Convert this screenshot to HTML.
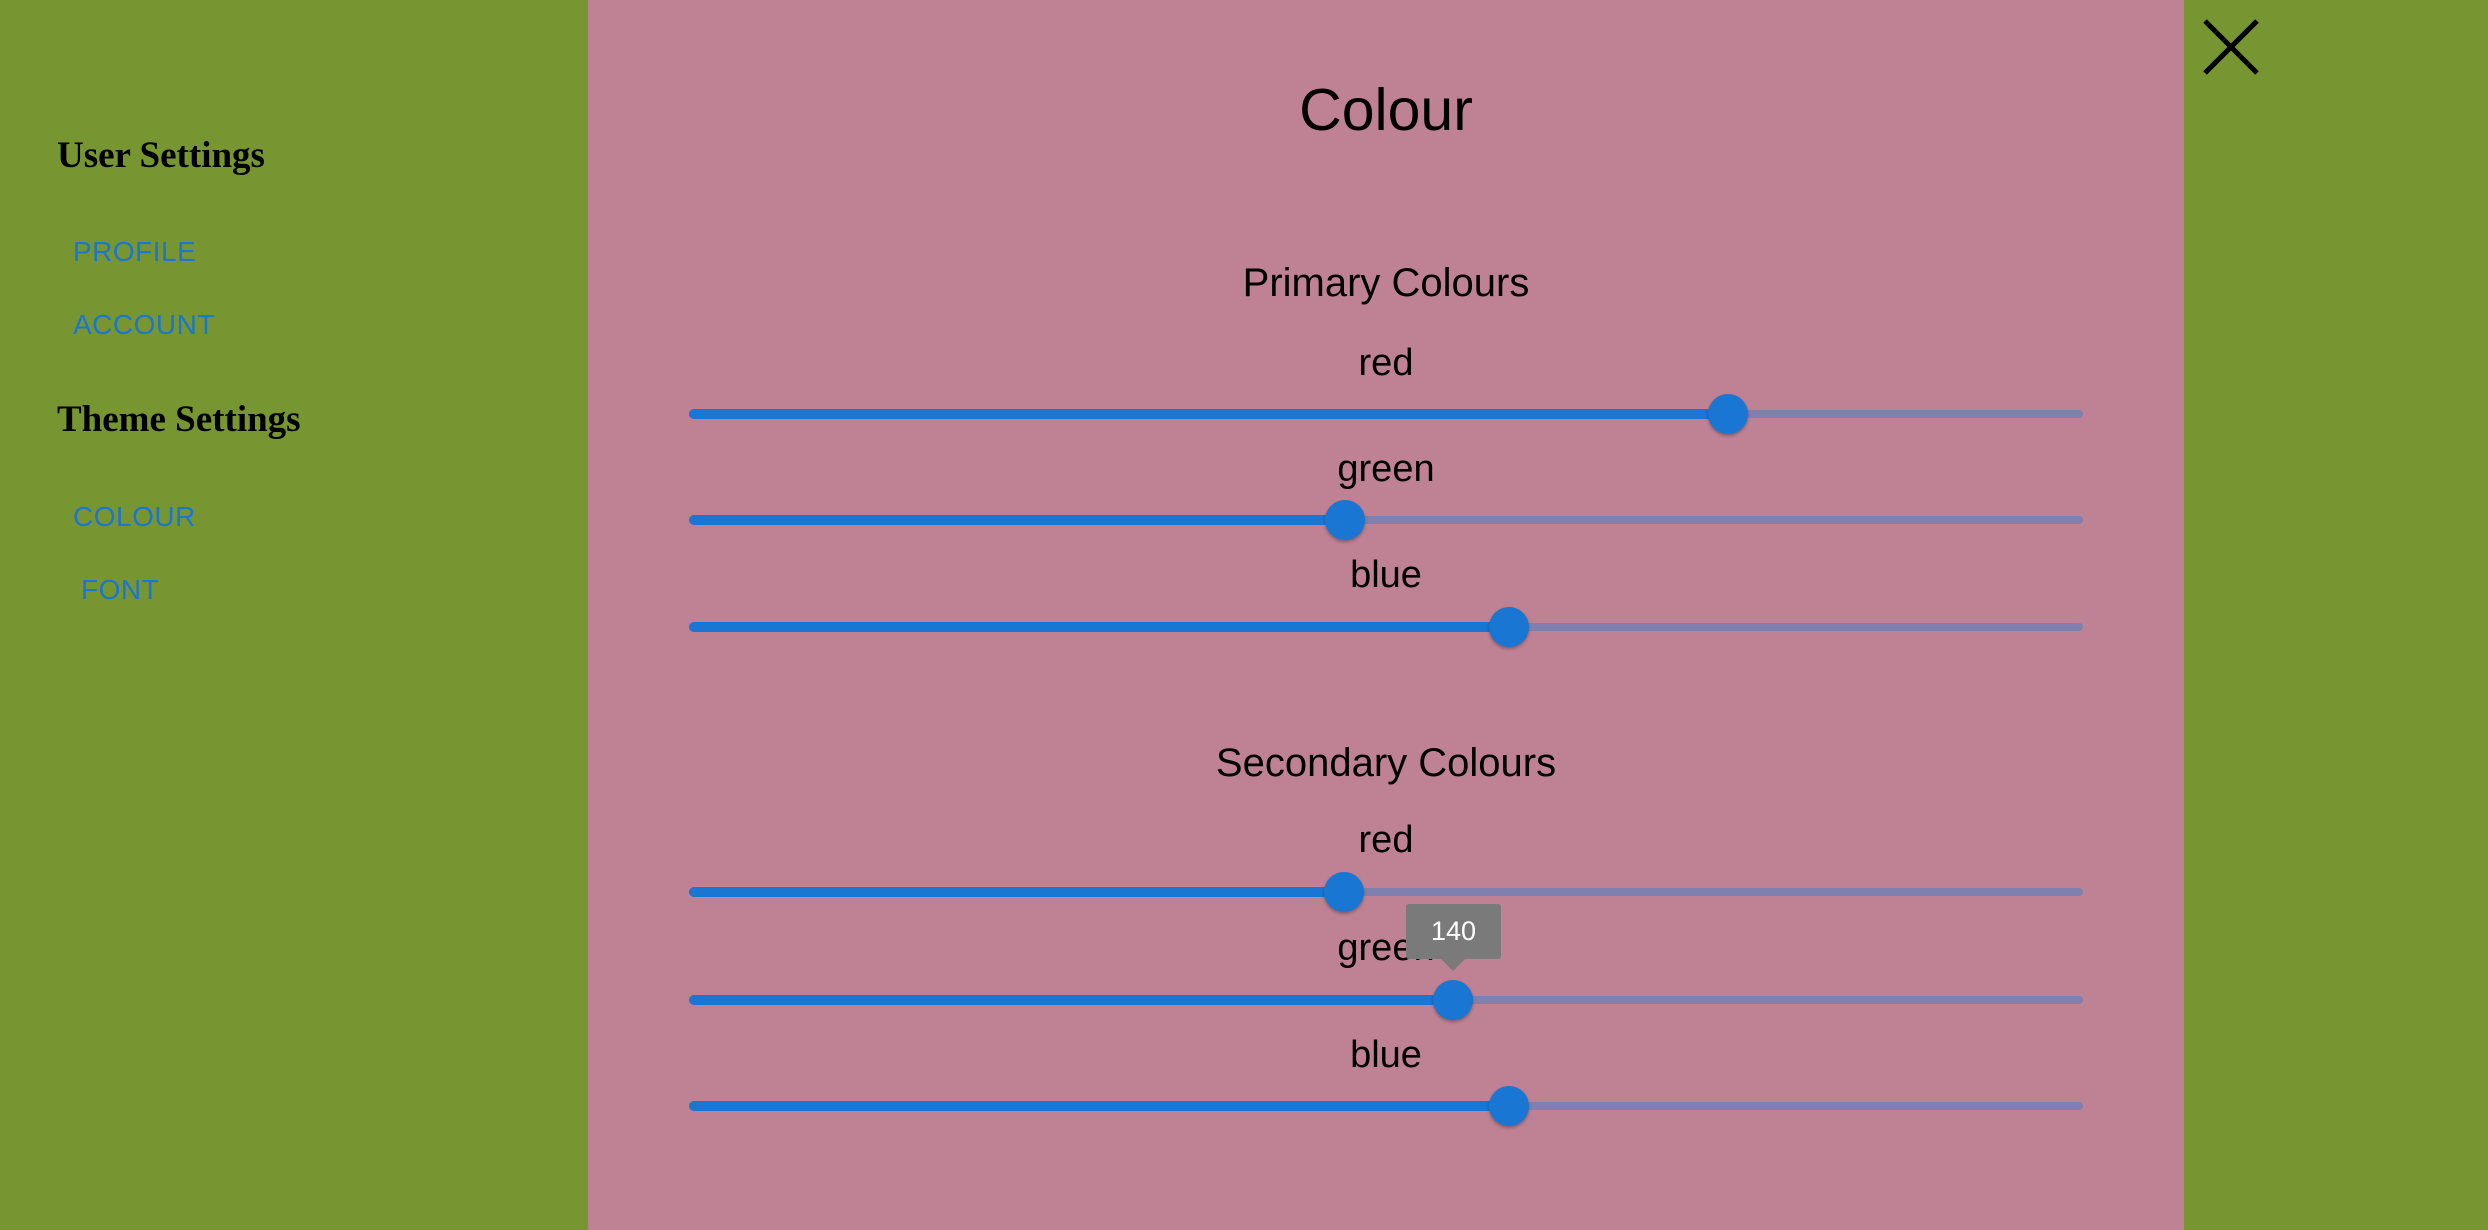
<!DOCTYPE html>
<html><head><style>
html,body{margin:0;padding:0;width:2488px;height:1230px;overflow:hidden;background:#779632;font-family:"Liberation Sans",Arial,sans-serif}
.panel{position:absolute;left:588px;top:0;width:1596px;height:1230px;background:#be8294}
.h{position:absolute;left:57px;font-family:"Liberation Serif",serif;font-weight:bold;font-size:37px;color:#000;line-height:1}
.l{position:absolute;font-size:28px;color:#1976d2;line-height:1;letter-spacing:0.5px}
.c{position:absolute;width:100%;text-align:center;color:#000;line-height:1}
.track{position:absolute;left:689px;width:1394px;height:8px;border-radius:4px;background:#8080b0}
.act{position:absolute;left:0;top:-1px;height:10px;border-radius:5px;background:#1976d2}
.th{position:absolute;top:-16px;width:40px;height:40px;margin-left:-20px;border-radius:50%;background:#1976d2;box-shadow:0 2px 3px rgba(0,0,0,.3)}
</style></head><body>
<div class="h" style="top:137px">User Settings</div>
<div class="l" style="left:73px;top:238px">PROFILE</div>
<div class="l" style="left:73px;top:311px">ACCOUNT</div>
<div class="h" style="top:401px">Theme Settings</div>
<div class="l" style="left:73px;top:503px">COLOUR</div>
<div class="l" style="left:81px;top:576px">FONT</div>
<div class="panel">
<div class="c" style="top:81px;font-size:59px">Colour</div>
<div class="c" style="top:263px;font-size:40px">Primary Colours</div>
<div class="c" style="top:344px;font-size:38px">red</div>
<div class="c" style="top:450px;font-size:38px">green</div>
<div class="c" style="top:556px;font-size:38px">blue</div>
<div class="c" style="top:743px;font-size:40px">Secondary Colours</div>
<div class="c" style="top:821px;font-size:38px">red</div>
<div class="c" style="top:929px;font-size:38px">green</div>
<div class="c" style="top:1036px;font-size:38px">blue</div>
</div>
<div class="track" style="top:410px"><div class="act" style="width:1039px"></div><div class="th" style="left:1039px"></div></div>
<div class="track" style="top:516px"><div class="act" style="width:656px"></div><div class="th" style="left:656px"></div></div>
<div class="track" style="top:623px"><div class="act" style="width:820px"></div><div class="th" style="left:820px"></div></div>
<div class="track" style="top:888px"><div class="act" style="width:655px"></div><div class="th" style="left:655px"></div></div>
<div class="track" style="top:996px"><div class="act" style="width:764px"></div><div class="th" style="left:764px"></div></div>
<div class="track" style="top:1102px"><div class="act" style="width:820px"></div><div class="th" style="left:820px"></div></div>
<div style="position:absolute;left:1406px;top:904px;width:95px;height:55px;background:#7a7a7a;border-radius:3px;color:#fff;font-size:27px;text-align:center;line-height:55px">140</div>
<div style="position:absolute;left:1441px;top:959px;width:0;height:0;border-left:12px solid transparent;border-right:12px solid transparent;border-top:12px solid #7a7a7a"></div>
<svg style="position:absolute;left:2203px;top:19px" width="56" height="56" viewBox="0 0 56 56"><path d="M2 2L54 54M54 2L2 54" stroke="#000" stroke-width="5"/></svg>
</body></html>
